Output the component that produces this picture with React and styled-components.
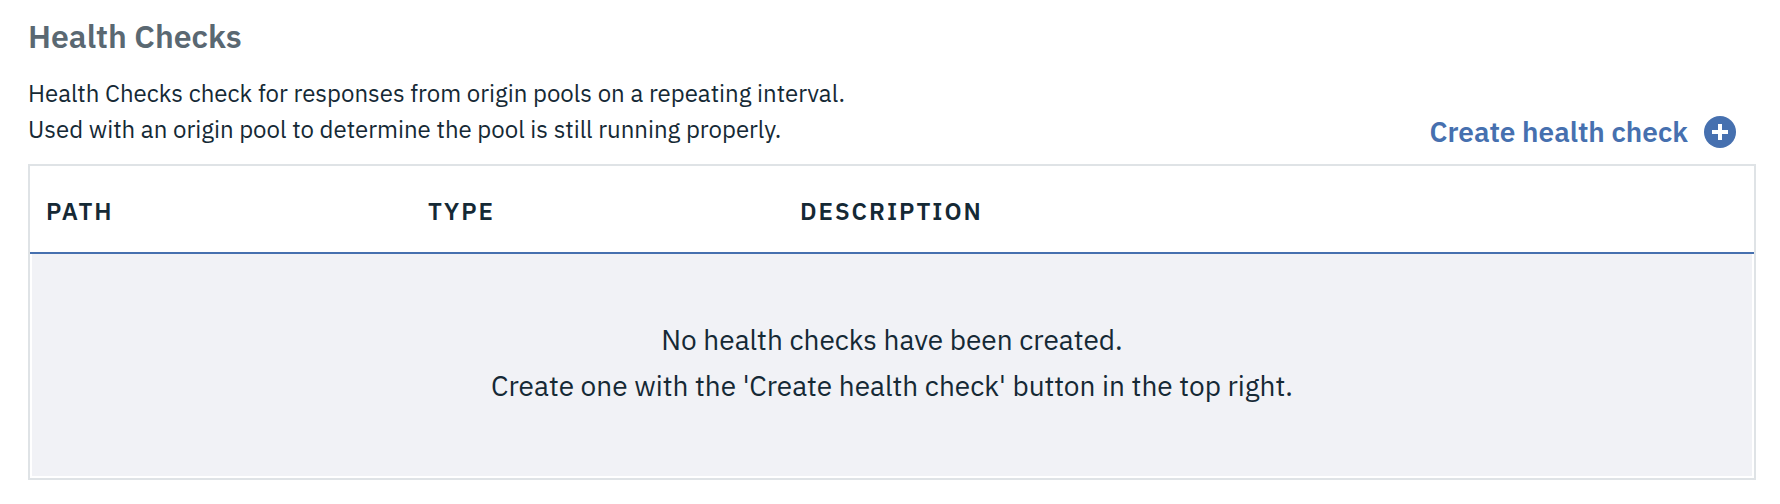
import React from 'react';
import styled, { createGlobalStyle } from 'styled-components';

const GlobalStyle = createGlobalStyle`
  *, *::before, *::after { box-sizing: border-box; }
  body {
    margin: 0;
    background: #fff;
    color: #152935;
    font-family: 'IBM Plex Sans', Roboto, sans-serif;
  }
`;

const Section = styled.section`
  padding: 16px 24px 24px 28px;
`;

const Title = styled.h2`
  margin: 0 0 19px;
  font-size: 32px;
  line-height: 40px;
  font-weight: 600;
  color: #5a6872;
`;

const Toolbar = styled.div`
  display: flex;
  align-items: flex-end;
  justify-content: space-between;
  padding-right: 20px;
  margin-bottom: 16px;
`;

const Description = styled.p`
  margin: 0 0 1px;
  font-size: 24px;
  line-height: 36px;
`;

const Line = styled.span`
  display: block;
`;

const CreateButton = styled.button`
  display: flex;
  align-items: center;
  gap: 16px;
  padding: 0;
  border: 0;
  background: none;
  color: #4670af;
  font: inherit;
  font-size: 28px;
  line-height: 32px;
  font-weight: 600;
  cursor: pointer;
`;

const Table = styled.div`
  border: 2px solid #dfe3e6;
`;

const HeaderRow = styled.div`
  display: grid;
  grid-template-columns: 382px 372px 1fr;
  align-items: center;
  height: 88px;
  padding: 4px 16px 0;
  border-bottom: 2px solid #4670af;
`;

const HeaderCell = styled.div`
  font-size: 24px;
  line-height: 32px;
  font-weight: 600;
  letter-spacing: 2px;
`;

const EmptyState = styled.div`
  height: 222px;
  margin: 0 2px 2px;
  padding-top: 63px;
  background: #f1f2f6;
  font-size: 28px;
  line-height: 46px;
  text-align: center;
`;

const AddIcon = () => (
  <svg width="32" height="32" viewBox="0 0 32 32" aria-hidden="true">
    <circle cx="16" cy="16" r="16" fill="#4670af" />
    <path d="M14 8h4v6h6v4h-6v6h-4v-6H8v-4h6z" fill="#fff" />
  </svg>
);

const columns = ['PATH', 'TYPE', 'DESCRIPTION'];

export default function App() {
  return (
    <>
      <GlobalStyle />
      <Section>
        <Title>Health Checks</Title>
        <Toolbar>
          <Description>
            <Line>
              Health Checks check for responses from origin pools on a repeating interval.
            </Line>
            <Line>
              Used with an origin pool to determine the pool is still running properly.
            </Line>
          </Description>
          <CreateButton type="button">
            Create health check
            <AddIcon />
          </CreateButton>
        </Toolbar>
        <Table>
          <HeaderRow>
            {columns.map((name) => (
              <HeaderCell key={name}>{name}</HeaderCell>
            ))}
          </HeaderRow>
          <EmptyState>
            <Line>No health checks have been created.</Line>
            <Line>
              Create one with the 'Create health check' button in the top right.
            </Line>
          </EmptyState>
        </Table>
      </Section>
    </>
  );
}
